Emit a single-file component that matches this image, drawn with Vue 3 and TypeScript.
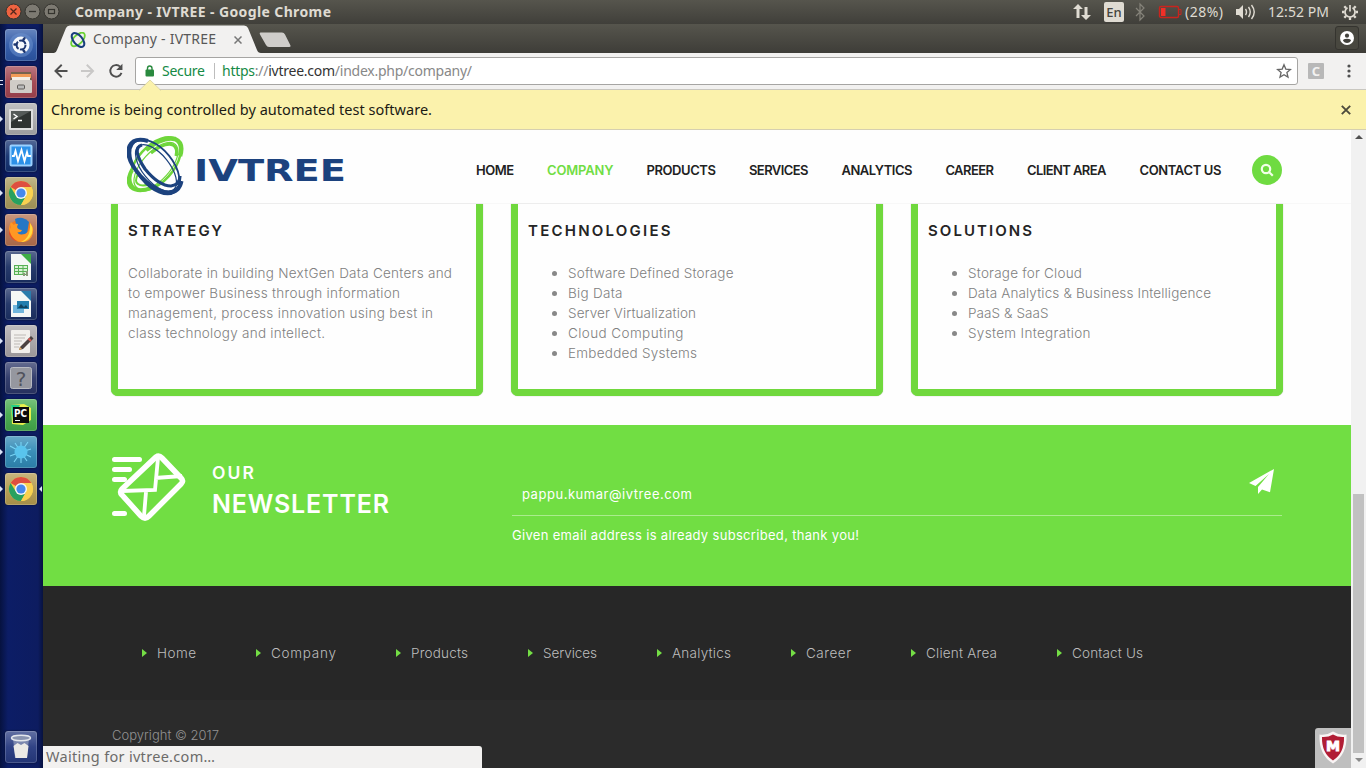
<script setup lang="ts">
import type { Directive } from 'vue'

interface Item { label: string; w: number }
interface Card { title: string; w: number; list: boolean; lines: Item[] }
interface Launcher { name: string; bg: string; running?: boolean; active?: boolean }

// Tracks a single line of text so that it fills the given width.
const applyFit = (el: HTMLElement, width: number) => {
  const n = (el.textContent ?? '').trim().length
  el.style.letterSpacing = '0px'
  el.style.marginRight = '0px'
  const gap = (width - el.getBoundingClientRect().width) / Math.max(1, n - 1)
  el.style.letterSpacing = `${gap}px`
  el.style.marginRight = `${-gap}px`
}
const vFit: Directive<HTMLElement, number> = {
  mounted(el, binding) {
    applyFit(el, binding.value)
  },
}

const launchers: Launcher[] = [
  { name: 'dash', bg: '#2c56a6' },
  { name: 'files', bg: '#a0434f', running: true },
  { name: 'terminal', bg: '#a9a9ab', running: true },
  { name: 'monitor', bg: '#12306f' },
  { name: 'browser', bg: '#a89a5c', running: true },
  { name: 'firefox', bg: '#b4704f', running: true },
  { name: 'calc', bg: '#1b3064' },
  { name: 'impress', bg: '#1b3064' },
  { name: 'editor', bg: '#a7a3a6', running: true },
  { name: 'help', bg: '#2a3566' },
  { name: 'pycharm', bg: '#43a84a', running: true },
  { name: 'burst', bg: '#2f88b4', running: true },
  { name: 'browser', bg: '#b39a4e', running: true, active: true },
  { name: 'trash', bg: '#26397f' },
]

const nav: Item[] = [
  { label: 'HOME', w: 38 }, { label: 'COMPANY', w: 66.5 }, { label: 'PRODUCTS', w: 69.5 },
  { label: 'SERVICES', w: 59.5 }, { label: 'ANALYTICS', w: 71 }, { label: 'CAREER', w: 48.5 },
  { label: 'CLIENT AREA', w: 79.5 }, { label: 'CONTACT US', w: 82 },
]

const cards: Card[] = [
  { title: 'STRATEGY', w: 94, list: false, lines: [
    { label: 'Collaborate in building NextGen Data Centers and', w: 324 },
    { label: 'to empower Business through information', w: 272 },
    { label: 'management, process innovation using best in', w: 305 },
    { label: 'class technology and intellect.', w: 197 },
  ] },
  { title: 'TECHNOLOGIES', w: 142.5, list: true, lines: [
    { label: 'Software Defined Storage', w: 165.5 }, { label: 'Big Data', w: 54.5 },
    { label: 'Server Virtualization', w: 128 }, { label: 'Cloud Computing', w: 115.5 },
    { label: 'Embedded Systems', w: 129 },
  ] },
  { title: 'SOLUTIONS', w: 104, list: true, lines: [
    { label: 'Storage for Cloud', w: 114 }, { label: 'Data Analytics & Business Intelligence', w: 243 },
    { label: 'PaaS & SaaS', w: 80.5 }, { label: 'System Integration', w: 122.5 },
  ] },
]

const footer: Item[] = [
  { label: 'Home', w: 39 }, { label: 'Company', w: 65 }, { label: 'Products', w: 57 },
  { label: 'Services', w: 54 }, { label: 'Analytics', w: 59 }, { label: 'Career', w: 45 },
  { label: 'Client Area', w: 71 }, { label: 'Contact Us', w: 71 },
]
</script>

<template>
  <div class="desktop">
    <header class="panel">
      <svg class="winbtns" width="64" height="24" viewBox="0 0 64 24">
        <circle cx="13.500" cy="11.500" r="7.500" fill="#ee6340" stroke="#34332e" />
        <path d="M10.500 8.500l6 6m0-6l-6 6" stroke="#52271b" stroke-width="1.300" />
        <circle cx="32.500" cy="11.500" r="7.500" fill="#7d7a72" stroke="#34332e" />
        <path d="M29 11.500h7" stroke="#34332e" stroke-width="1.300" />
        <circle cx="51.500" cy="11.500" r="7.500" fill="#7d7a72" stroke="#34332e" />
        <rect x="48.500" y="9.500" width="6" height="4" fill="none" stroke="#34332e" stroke-width="1.200" />
      </svg>
      <span v-fit="256" class="t wintitle">Company - IVTREE - Google Chrome</span>
      <div class="tray">
        <svg width="18" height="24" viewBox="0 0 18 24" fill="#dfdbd2">
          <path d="M5 4l5 5H6.500v9h-3V9H0zM11.500 7h3v8H18l-5 5-5-5h3.500z" />
        </svg>
        <span class="lang">En</span>
        <svg class="bt" width="10" height="24" viewBox="0 0 10 24" fill="none" stroke="#85837a" stroke-width="1.200">
          <path d="M1 8l8 8-4 4V4l4 4-8 8" />
        </svg>
        <svg class="bat" width="24" height="24" viewBox="0 0 24 24">
          <rect x="1.500" y="6.500" width="19" height="11" rx="1.500" fill="none" stroke="#c9241e" stroke-width="1.400" />
          <rect x="3" y="8" width="4.500" height="8" fill="#f02f27" />
          <path d="M21 9.500h2v5h-2" fill="none" stroke="#c9241e" />
        </svg>
        <span v-fit="38" class="t traytxt">(28%)</span>
        <svg class="vol" width="22" height="24" viewBox="0 0 22 24" fill="none" stroke="#dfdbd2" stroke-width="1.400">
          <path d="M1 9h3l4-4v14l-4-4H1z" fill="#dfdbd2" stroke="none" />
          <path d="M10.500 9q2 3 0 6M13.500 7q3.500 5 0 10M16.500 5q5.500 7 0 14" />
        </svg>
        <span v-fit="61" class="t traytxt">12:52 PM</span>
        <svg class="gear" width="18" height="24" viewBox="0 0 18 24" fill="none" stroke="#dfdbd2">
          <path d="M6.500 7.700A5 5 0 1 0 11.500 7.700" stroke-width="1.700" />
          <path d="M9 5v6.500" stroke-width="1.700" />
          <path d="M5.100 8.100L3.300 6.300M12.900 8.100l1.800-1.800M3.500 12H1M14.500 12H17M5.100 15.900l-1.800 1.800M12.900 15.900l1.800 1.800M9 17.500V20" stroke-width="2.300" />
        </svg>
      </div>
    </header>

    <div class="body">
      <aside class="launcher">
        <div v-for="(l, i) in launchers" :key="i" class="tile" :class="l.name" :style="{ backgroundColor: l.bg }">
          <i v-if="l.running" class="run"></i>
          <i v-if="l.active" class="run act"></i>
          <svg width="32" height="32" viewBox="0 0 32 32">
            <g v-if="l.name === 'dash'">
              <circle cx="16" cy="16" r="12" fill="#6e93cf" opacity=".5" />
              <circle cx="16" cy="16" r="8.500" fill="#f5f8fd" />
              <circle cx="16" cy="16" r="4.500" fill="none" stroke="#1d3670" stroke-width="2" stroke-dasharray="8 1.420" />
              <path d="M9.500 15.500h1.800M18.500 10.500l1-1.300M18.500 21.500l1 1.300" stroke="#1d3670" stroke-width="2.400" stroke-linecap="round" />
            </g>
            <g v-else-if="l.name === 'files'">
              <path d="M6 6h20l1 10H5z" fill="#77624e" />
              <rect x="6" y="8" width="20" height="4" fill="#f19a55" />
              <path d="M7 11h18v3H7z" fill="#f4ede3" />
              <rect x="5" y="14" width="22" height="13" rx="1" fill="#d0ccc7" />
              <rect x="12.500" y="19" width="7" height="4" rx="1" fill="#bbb" stroke="#5e5b58" />
            </g>
            <g v-else-if="l.name === 'terminal'">
              <rect x="4" y="6" width="24" height="21" rx="1" fill="#dedede" />
              <rect x="6" y="8" width="20" height="17" fill="#2f3331" />
              <path d="M6 8h20l-20 11z" fill="#555a58" />
              <path d="M8.500 11l3.500 2.500L8.500 16M13 17.500h4" fill="none" stroke="#fff" stroke-width="1.400" />
            </g>
            <g v-else-if="l.name === 'monitor'">
              <rect x="5.500" y="5.500" width="21" height="20" rx="1" fill="#2c91e8" stroke="#9ad1ff" stroke-width="2" />
              <path d="M7 16h2l1.500-5 2.500 10L16.500 10l3 11 2.500-9 1 4h3" fill="none" stroke="#fff" stroke-width="1.800" />
            </g>
            <g v-else-if="l.name === 'browser'">
              <circle cx="16" cy="16" r="12" fill="#f7ce45" />
              <path d="M16 16L5.600 10A12 12 0 0 1 26.400 10z" fill="#de4f40" />
              <path d="M5.600 10A12 12 0 0 0 16 28l5-9-10.500-1z" fill="#27a160" />
              <path d="M16 10h10.400A12 12 0 0 1 16 28l5.200-9z" fill="#f9d150" />
              <circle cx="16" cy="16" r="6" fill="#f7f7f4" />
              <circle cx="16" cy="16" r="4.600" fill="#4688ed" />
            </g>
            <g v-else-if="l.name === 'firefox'">
              <circle cx="16" cy="16.500" r="11.500" fill="#f57b1e" />
              <path d="M10 5a11 11 0 0 1 14 3l-2 12-9 1z" fill="#2777c5" />
              <path d="M6 8q-4 7 0 13 4 7 11 7 9 0 11-9 1-6-3-10 1 8-5 11-6 2-8-2 4 1 5-2-4 0-5-3l1-3q-3-1-4 1z" fill="#ff9823" />
              <path d="M25 9q5 7 0 14-4 5-9 5 10-4 9-19z" fill="#ffdb42" />
              <path d="M6 10q-4 11 6 17-5 0-8-7z" fill="#e54b27" />
            </g>
            <g v-else-if="l.name === 'calc' || l.name === 'impress'">
              <path d="M6 3h13l7 8v18H6z" fill="#f4f7f5" />
              <path d="M16 3h10v10z" :fill="l.name === 'calc' ? '#3fae46' : '#2a7cab'" />
              <g v-if="l.name === 'calc'">
                <rect x="9.500" y="14.500" width="13" height="9" fill="#d9f2d5" stroke="#56b155" />
                <path d="M9 17.500h14M9 20.500h14M13.500 14v10M18 14v10" stroke="#56b155" />
                <path d="M18 25v-3h2v3zM21 25v-5h2v5z" fill="#8a9a7a" />
              </g>
              <g v-else>
                <rect x="8" y="17" width="11" height="8" fill="#71b6dc" />
                <rect x="12" y="13" width="12" height="8" fill="#217eae" />
                <path d="M13 20l3-4 3 3 2-2 2 3z" fill="#10435f" />
              </g>
            </g>
            <g v-else-if="l.name === 'editor'">
              <rect x="6" y="5" width="19" height="23" rx="1" fill="#f1efec" />
              <path d="M9 10h12M9 13h11M9 16h8M9 19h6M9 22h5" stroke="#bdb9b5" />
              <path d="M15 22L26 11l2.500 2.500L18 24l-4 1z" fill="#4a4140" />
              <path d="M14 25l1-3 2 2z" fill="#e8ae62" />
              <path d="M23.500 13.500l2.500 2.500" stroke="#d65b54" stroke-width="2" />
            </g>
            <g v-else-if="l.name === 'help'">
              <rect x="5.500" y="5.500" width="21" height="21" rx="2" fill="#95979f" stroke="#b9bbc2" />
              <text x="16" y="23.500" text-anchor="middle" class="qm">?</text>
            </g>
            <g v-else-if="l.name === 'pycharm'">
              <path d="M6 6l13-1 7 4 0 12-8 5-11-1z" fill="#e9ef4d" />
              <path d="M6 6h9l-7 17z" fill="#25cf84" />
              <rect x="8" y="8" width="16" height="16" fill="#0b0b0b" />
              <text x="9" y="17.500" class="pc" textLength="13" lengthAdjust="spacingAndGlyphs">PC</text>
              <path d="M10 21.500h5" stroke="#fff" />
            </g>
            <g v-else-if="l.name === 'burst'">
              <path d="M16 16L5 10M16 16l-6-9M16 16V6M16 16l7-10M16 16l10-3M16 16l10 5M16 16l6 9M16 16v11M16 16L9 26M16 16L5 20" stroke="#7ad5f5" stroke-width="1.100" />
              <circle cx="16" cy="16" r="6.500" fill="#59c4ed" />
            </g>
            <g v-else>
              <path d="M8 7h16l-2 20H10z" fill="#a5aec4" opacity=".6" />
              <path d="M8.500 15l4-3 3.500 2 3.500-2 4 3-1.500 12H10.500z" fill="#eceae6" />
              <ellipse cx="16" cy="7" rx="9.500" ry="2.700" fill="#8a94b0" stroke="#e3e6ec" stroke-width="1.500" />
            </g>
          </svg>
        </div>
      </aside>

      <main class="window">
        <div class="tabs">
          <svg class="tabshape" width="260" height="29" viewBox="0 0 260 29">
            <path d="M11 29Q13 29 14 26L23 4Q24 1.500 27 1.500H201Q204 1.500 205 4L214 26Q215 29 218 29z" fill="#f2f1f0" />
            <path d="M217.500 8.500H239Q241 8.500 242 10.500L247.500 21.500Q248 23 246 23H226Q224 23 223 21L217 10.500Q216 8.500 217.500 8.500z" fill="#cfcdca" />
          </svg>
          <div class="tabrow">
            <svg width="16" height="16" viewBox="0 0 62 62" fill="none">
              <g stroke="#6bd136" stroke-width="7"><ellipse cx="31" cy="29" rx="17" ry="33" transform="rotate(45 31 29)" /></g>
              <ellipse cx="31" cy="31" rx="17" ry="32" transform="rotate(-40 31 31)" stroke="#183e7d" stroke-width="8" />
            </svg>
            <span v-fit="123" class="t tabtitle">Company - IVTREE</span>
            <svg class="tabx" width="8" height="8" viewBox="0 0 8 8"><path d="M.5.5l7 7m0-7l-7 7" stroke="#777" stroke-width="1.500" /></svg>
          </div>
          <div class="profile">
            <svg width="14" height="14" viewBox="0 0 14 14">
              <circle cx="7" cy="7" r="7" fill="#fff" /><circle cx="7" cy="4.700" r="2.100" fill="#43423c" />
              <path d="M3 9.800q0-2 4-2t4 2q-1.500 2.200-4 2.200t-4-2.200z" fill="#43423c" />
            </svg>
          </div>
        </div>

        <div class="toolbar">
          <svg class="navs" width="84" height="18" viewBox="0 0 84 18" fill="none" stroke-width="2">
            <path d="M14 9H1.500M8 2.500L1.500 9 8 15.500" stroke="#4f4f4f" />
            <path d="M28 9h12.500M34 2.500L40.500 9 34 15.500" stroke="#c9c8c7" />
            <path d="M68.500 4.500A6 6 0 1 0 70 11" stroke="#4f4f4f" /><path d="M71 1.500V8h-6.500z" fill="#4f4f4f" />
          </svg>
          <div class="omni">
            <svg width="10" height="12" viewBox="0 0 10 12"><rect x=".5" y="4.500" width="8.500" height="7" rx="1" fill="#2a8a3f" /><path d="M2.500 5V3.200Q2.500 1 4.700 1T7 3.200V5" fill="none" stroke="#2a8a3f" stroke-width="1.400" /></svg>
            <span v-fit="43" class="t secure">Secure</span>
            <i class="vsep"></i>
            <span v-fit="250" class="t url"><b>https</b><i>://</i>ivtree.com<i>/index.php/company/</i></span>
            <svg class="star" width="16" height="16" viewBox="0 0 16 16"><path d="M8 1.800l1.800 4.300 4.600.4-3.500 3 1.100 4.600L8 11.700l-4 2.400 1.100-4.600-3.500-3 4.600-.4z" fill="none" stroke="#666" stroke-width="1.300" /></svg>
          </div>
          <span class="ext">C</span>
          <svg class="dots" width="4" height="14" viewBox="0 0 4 14" fill="#4f4f4f"><circle cx="2" cy="2" r="1.600" /><circle cx="2" cy="7" r="1.600" /><circle cx="2" cy="12" r="1.600" /></svg>
        </div>

        <div class="infobar">
          <svg class="bump" width="22" height="11" viewBox="0 0 22 11"><path d="M0 11L11 0l11 11z" fill="#fbf2ac" /><path d="M0 10.500L11 0l11 10.500" fill="none" stroke="#d6cf9c" stroke-width=".8" /></svg>
          <span v-fit="381" class="t">Chrome is being controlled by automated test software.</span>
          <svg width="10" height="10" viewBox="0 0 10 10"><path d="M.8.800l8.400 8.400m0-8.400L.8 9.200" stroke="#4c4a3c" stroke-width="1.900" /></svg>
        </div>

        <div class="view">
          <div class="page">
            <nav class="sitenav">
              <svg class="logo" width="220" height="62" viewBox="0 0 220 62" fill="none">
                <g stroke="#6fd63b">
                  <ellipse cx="28.500" cy="28" rx="18" ry="32" transform="rotate(42 28.500 28)" stroke-width="2.500" />
                  <ellipse cx="29" cy="30" rx="14" ry="29" transform="rotate(42 29 30)" stroke-width="1.200" />
                  <path d="M19 14Q36 0 48 3q9 4 5 17" stroke-width="4.500" />
                  <path d="M24 17Q38 6 46 9q5 3 3 11" stroke-width="3" />
                  <path d="M5 34Q-1 45 4 51q7 6 20 1" stroke-width="4" />
                  <path d="M11 38q-4 8 0 10 4 3 12 0" stroke-width="2" />
                </g>
                <g stroke="#1c427e">
                  <ellipse cx="28" cy="31" rx="18" ry="32" transform="rotate(-39 28 31)" stroke-width="1.800" />
                  <ellipse cx="29" cy="32" rx="13.500" ry="28" transform="rotate(-39 29 32)" stroke-width="1.200" />
                  <path d="M21 5Q7 1 2.500 10q-5 12 11 30 11 12 23 16 15 3 18-11" stroke-width="4" />
                  <path d="M15 9Q4 12 18 33q14 17 26 17 9-1 9-10" stroke-width="3.200" />
                </g>
                <text x="67" y="45" class="brand" textLength="152" lengthAdjust="spacingAndGlyphs">IVTREE</text>
              </svg>
              <div class="menu">
                <span v-for="n in nav" :key="n.label" v-fit="n.w" class="t" :class="{ on: n.label === 'COMPANY' }">{{ n.label }}</span>
              </div>
              <span class="search"><svg width="14" height="14" viewBox="0 0 14 14" fill="none" stroke="#f2ffe9" stroke-width="2.200"><circle cx="6" cy="6" r="4.200" /><path d="M9 9l3.800 3.800" /></svg></span>
            </nav>

            <section class="cards">
              <article v-for="c in cards" :key="c.title" class="card">
                <h3><span v-fit="c.w" class="t">{{ c.title }}</span></h3>
                <div class="lines" :class="{ list: c.list }">
                  <p v-for="l in c.lines" :key="l.label"><i v-if="c.list"></i><span v-fit="l.w" class="t">{{ l.label }}</span></p>
                </div>
              </article>
            </section>

            <section class="news">
              <svg class="mail" width="76" height="72" viewBox="0 0 76 72" fill="none" stroke="#fff">
                <path d="M2.500 8.500h25M2.500 18.500h15M2.500 28.500h10M2.500 62.500h10" stroke-width="5" stroke-linecap="round" />
                <path d="M44 6q3-2 6 1l19 20q3 3 0 6L37 65q-4 4-8 0L10 44q-3-3 0-6z" stroke-width="5.500" fill="#71de43" />
                <path d="M46 7l-3 32-33 1M43 27l27-2M34 41l-2 24" stroke-width="3.800" />
              </svg>
              <div class="heading">
                <span v-fit="42" class="t our">OUR</span>
                <span v-fit="177" class="t big">NEWSLETTER</span>
              </div>
              <div class="form">
                <div class="field">
                  <span v-fit="170" class="t">pappu.kumar@ivtree.com</span>
                  <svg width="25" height="25" viewBox="0 0 25 25" fill="#fff"><path d="M25 0L0 14l6.500 3L20 5 9 18v7l4-4.500 8 2.700z" /></svg>
                </div>
                <span v-fit="347" class="t msg">Given email address is already subscribed, thank you!</span>
              </div>
            </section>

            <section class="links">
              <a v-for="f in footer" :key="f.label"><i></i><span v-fit="f.w" class="t">{{ f.label }}</span></a>
            </section>
            <section class="copy"><span v-fit="107" class="t">Copyright © 2017</span></section>

            <div class="status"><span v-fit="169" class="t">Waiting for ivtree.com…</span></div>
            <div class="shield">
              <svg width="32" height="34" viewBox="0 0 32 34">
                <path d="M2.500 4.500q7.500 1 13.500-3 6 4 13.500 3 1 20-13.500 29Q1.500 25 2.500 4.500z" fill="#f9f5f5" />
                <path d="M5 7Q11 7.500 16 4.500q5 3 11 2.500Q27.500 23 16 30.500 4.500 23 5 7z" fill="#b11d35" />
                <text x="9" y="21" class="mc" textLength="14" lengthAdjust="spacingAndGlyphs">M</text>
              </svg>
            </div>
          </div>
          <div class="scroll">
            <i class="up"></i><i class="thumb"></i><i class="down"></i>
          </div>
        </div>
      </main>
    </div>
  </div>
</template>

<style>
body { overflow: hidden; }
</style>

<style scoped>
* { box-sizing: border-box; }
svg { display: block; flex: none; }
.t { display: inline-block; white-space: pre; flex: none; }
.desktop { width: 1366px; height: 768px; display: flex; flex-direction: column; font-family: "Noto Sans", sans-serif; overflow: hidden; }
.panel { height: 24px; flex: none; display: flex; align-items: center; background: linear-gradient(#56554d, #403f3a); color: #dfdbd2; }
.wintitle { margin-left: 11px; font-size: 14px; font-weight: 700; line-height: 24px; }
.tray { margin-left: auto; display: flex; align-items: center; padding-right: 7px; font-size: 14px; line-height: 24px; }
.lang { width: 20px; height: 20px; margin-left: 13px; border-radius: 2px; background: #dfdbd2; color: #454440; line-height: 20px; text-align: center; font-size: 13px; font-weight: 500; }
.bt { margin-left: 11px; }
.bat { margin: 0 3px 0 13px; }
.vol { margin: 0 11px 0 12px; }
.gear { margin-left: 12px; }
.body { flex: 1; display: flex; min-height: 0; }
.launcher { width: 43px; flex: none; display: flex; flex-direction: column; gap: 5px; padding: 5px 0 5px 5px; background: linear-gradient(90deg, #06123f, #0c1d66 8px, #0d1c60 38px, #07123f); }
.tile { position: relative; width: 32px; height: 32px; flex: none; border-radius: 3px; background-image: linear-gradient(rgba(255,255,255,.28), rgba(255,255,255,.05) 50%, rgba(0,0,0,.08)); box-shadow: inset 0 0 0 1px rgba(255,255,255,.18), 0 0 2px rgba(0,0,0,.6); }
.trash { margin-top: auto; }
.run { position: absolute; left: -5px; top: 13px; border: 3px solid transparent; border-left: 3px solid #dbe4f7; border-right: 0; }
.files .run { height: 5px; top: 14px; width: 3px; border: solid #dbe4f7; border-width: 1px 0; }
.act { left: 34px; border-left: 0; border-right: 3px solid #dbe4f7; }
.qm { font: 20px "DejaVu Sans", sans-serif; fill: #50525c; }
.pc { font: 700 10px "DejaVu Sans", sans-serif; fill: #fff; }
.mc { font: 700 14px "DejaVu Sans", sans-serif; fill: #fff; stroke: #fff; }
.window { flex: 1; display: flex; flex-direction: column; min-width: 0; }
.tabs { position: relative; height: 29px; flex: none; display: flex; background: linear-gradient(#56554d, #3e3d38); }
.tabshape { position: absolute; left: 0; top: 0; }
.tabrow { position: relative; display: flex; align-items: center; padding: 2px 0 0 27px; }
.tabtitle { margin: -2px 0 0 7px; font-size: 14px; line-height: 24px; color: #585858; }
.tabx { margin-left: 18px; }
.profile { margin: 2px 7px 3px auto; width: 24px; display: flex; align-items: center; justify-content: center; border: 1px solid #35342f; border-radius: 3px; background: #48473f; }
.toolbar { height: 37px; flex: none; display: flex; align-items: center; padding-left: 11px; background: #f2f1f0; border-bottom: 1px solid #c9c7c0; }
.navs { width: 81px; }
.omni { width: 1163px; height: 28px; display: flex; align-items: center; padding-left: 9px; background: #fff; border: 1px solid #a6a5a3; border-radius: 3px; font-size: 14px; line-height: 24px; }
.secure { margin-left: 7px; color: #158a45; }
.vsep { width: 1px; height: 16px; margin: 0 7px 0 9px; background: #bdbdbd; }
.url { color: #333; }
.url b { font-weight: 400; color: #158a45; }
.url i { font-style: normal; color: #888; }
.star { margin: 0 5px 0 auto; }
.ext { width: 16px; height: 16px; margin-left: 10px; border-radius: 1px; background: #b8b8b8; color: #f2f1f0; font-size: 13px; font-weight: 700; line-height: 16px; text-align: center; }
.dots { margin-left: 23px; }
.infobar { position: relative; height: 40px; flex: none; display: flex; align-items: center; justify-content: space-between; padding: 0 15px 0 8px; background: #fbf2ac; border-bottom: 1px solid #d5cfb0; font-size: 14.5px; color: #1c1b14; }
.infobar .t { margin-top: -2px; }
.bump { position: absolute; left: 96px; top: -10px; }
.view { flex: 1; display: flex; min-height: 0; }
.page { position: relative; width: 1308px; display: flex; flex-direction: column; background: #fefefe; font-family: Inter, sans-serif; font-size: 13px; }
.sitenav { height: 74px; flex: none; display: flex; padding-left: 84px; border-bottom: 1px solid #f8f8f8; }
.logo { margin-top: 6px; width: 220px; }
.brand { font: 700 31px "DejaVu Sans", sans-serif; fill: #1c427e; }
.menu { display: flex; gap: 33px; margin-left: 129px; line-height: 20px; padding-top: 30px; font-weight: 600; color: #222; }
.menu .on { color: #71dd44; }
.search { width: 30px; height: 30px; display: flex; align-items: center; justify-content: center; margin: 25px 0 0 auto; margin-right: 69px; border-radius: 50%; background: #6fdb41; }
.cards { height: 221px; flex: none; display: flex; gap: 28px; padding: 0 68px; }
.card { width: 372px; height: 192px; border: 7px solid #70d83d; border-top: 0; border-radius: 0 0 7px 7px; box-shadow: 0 0 1px #8c8c8c; padding: 17px 10px 0; }
.card h3 { margin: 0; font-size: 15px; font-weight: 600; line-height: 20px; color: #252525; }
.lines { padding-top: 22px; color: #808080; }
.lines p { display: flex; align-items: center; margin: 0; height: 20px; line-height: 20px; font-size: 13.5px; font-weight: 300; }
.list p { padding-left: 24px; }
.list i { width: 5px; height: 5px; margin-right: 11px; border-radius: 50%; background: #888; }
.news { height: 161px; flex: none; display: flex; background: #71de43; color: #fff; padding-left: 69px; }
.mail { margin-top: 26px; }
.heading { width: 300px; margin-left: 24px; display: flex; flex-direction: column; align-items: flex-start; padding-top: 35px; }
.our { font-size: 17.5px; font-weight: 600; line-height: 26px; }
.big { font-size: 25px; font-weight: 600; line-height: 36px; }
.form { width: 770px; padding-top: 42px; }
.field { height: 49px; display: flex; justify-content: space-between; padding: 0 8px 0 10px; border-bottom: 1px solid #aaec8d; }
.field .t { padding-top: 17px; line-height: 20px; }
.field svg { margin-top: 2px; }
.msg { line-height: 20px; margin-top: 9px; }
.links { height: 114px; flex: none; display: flex; gap: 60px; padding: 57px 0 0 99px; background: #272727; color: #bdbdbd; font-size: 13.5px; font-weight: 300; line-height: 20px; }
.links a { display: flex; }
.links i { width: 0; height: 0; margin: 6px 10px 0 0; border: 4px solid transparent; border-left: 5px solid #74de45; border-right: 0; }
.copy { flex: 1; padding: 25px 0 0 69px; background: #2b2b2b; color: #939393; font-weight: 300; line-height: 20px; }
.status { position: absolute; left: 0; bottom: 0; width: 439px; height: 22px; padding-left: 3px; border-radius: 0 3px 0 0; background: #f2f1f0; color: #6c6b69; font: 14.5px/20px "Noto Sans", sans-serif; }
.shield { position: absolute; right: 0; bottom: 0; width: 36px; height: 40px; padding: 2px 2px; background: #bfbfbf; border-radius: 3px 0 0 0; }
.scroll { width: 15px; display: flex; flex-direction: column; align-items: center; background: #f1f1f1; }
.up { margin-top: 5px; border: 4px solid transparent; border-bottom: 4px solid #505050; border-top: 0; }
.thumb { width: 11px; height: 259px; margin-top: auto; background: #c1c1c1; }
.down { margin: 5px 0 6px; border: 4px solid transparent; border-top: 4px solid #8a8a8a; border-bottom: 0; }
</style>
